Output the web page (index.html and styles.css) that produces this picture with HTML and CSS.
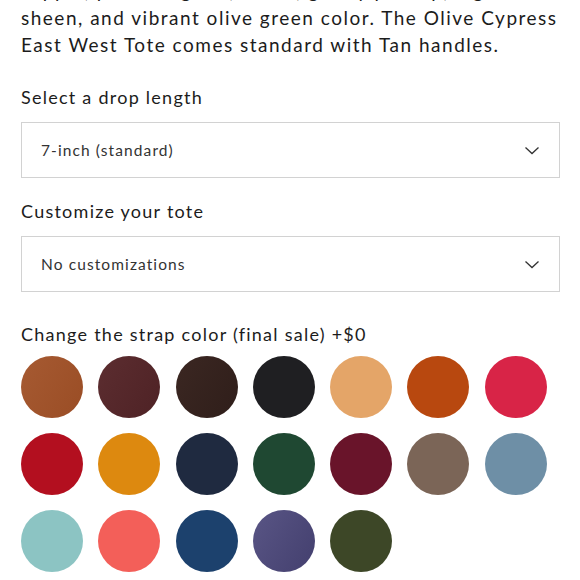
FILE: index.html
```html
<!DOCTYPE html>
<html lang="en">
<head>
<meta charset="utf-8">
<title>East West Tote</title>
<link rel="stylesheet" href="styles.css">
</head>
<body>
<main class="product">
  <p class="description">supple, pebbled grain, a rich, glossy pull-up, a gentle<br>sheen, and vibrant olive green color. The Olive Cypress<br>East West Tote comes standard with Tan handles.</p>

  <div class="field">
    <label class="field-label">Select a drop length</label>
    <div class="select">
      <span class="select-value">7-inch (standard)</span>
      <svg class="chevron" width="16" height="9" viewBox="0 0 16 9"><path d="M1.5 1.5l6.5 6 6.5-6" fill="none" stroke="#333" stroke-width="1.3"/></svg>
    </div>
  </div>

  <div class="field">
    <label class="field-label">Customize your tote</label>
    <div class="select">
      <span class="select-value">No customizations</span>
      <svg class="chevron" width="16" height="9" viewBox="0 0 16 9"><path d="M1.5 1.5l6.5 6 6.5-6" fill="none" stroke="#333" stroke-width="1.3"/></svg>
    </div>
  </div>

  <div class="swatches-field">
    <div class="field-label">Change the strap color (final sale) +$0</div>
    <div class="swatches">
      <span class="swatch s-tan"></span>
      <span class="swatch s-mahogany"></span>
      <span class="swatch s-chocolate"></span>
      <span class="swatch s-black"></span>
      <span class="swatch s-natural"></span>
      <span class="swatch s-cognac"></span>
      <span class="swatch s-raspberry"></span>
      <span class="swatch s-red"></span>
      <span class="swatch s-marigold"></span>
      <span class="swatch s-navy"></span>
      <span class="swatch s-green"></span>
      <span class="swatch s-wine"></span>
      <span class="swatch s-taupe"></span>
      <span class="swatch s-slate"></span>
      <span class="swatch s-aqua"></span>
      <span class="swatch s-coral"></span>
      <span class="swatch s-cobalt"></span>
      <span class="swatch s-purple"></span>
      <span class="swatch s-olive"></span>
    </div>
  </div>
</main>
</body>
</html>
```

FILE: styles.css
```css
* { box-sizing: border-box; }
html, body { margin: 0; padding: 0; background: #fff; }
body {
  font-family: Lato, "Open Sans", sans-serif;
  color: #1c1c1c;
  overflow: hidden;
}
.product {
  padding: 0 20px 0 21px;
}
.description {
  margin: -23px 0 0;
  font-size: 19px;
  line-height: 27px;
  letter-spacing: 1.5px;
  white-space: nowrap;
}
.field {
  margin-top: 27px;
}
.field + .field { margin-top: 21px; }
.field-label {
  display: block;
  font-size: 18px;
  line-height: 24px;
  letter-spacing: 1.25px;
}
.select {
  margin-top: 13px;
  height: 56px;
  border: 1px solid #d2d2d2;
  display: flex;
  align-items: center;
  justify-content: space-between;
  padding: 0 19px 0 19px;
}
.select-value {
  font-size: 15.5px;
  letter-spacing: 1.1px;
  color: #333;
}
.chevron { display: block; }
.swatches-field {
  margin-top: 30px;
}
.swatches {
  margin-top: 10px;
  display: grid;
  grid-template-columns: repeat(7, 62px);
  column-gap: 15.3px;
  row-gap: 15px;
}
.swatch {
  width: 62px;
  height: 62px;
  border-radius: 50%;
  display: block;
}
.s-tan { background: linear-gradient(120deg, #a65a32, #9a4d25); }
.s-mahogany { background: linear-gradient(120deg, #5c2d30, #4e2225); }
.s-chocolate { background: linear-gradient(120deg, #3b2722, #2f1e1a); }
.s-black { background: #1f1f22; }
.s-natural { background: #e4a568; }
.s-cognac { background: #b8480f; }
.s-raspberry { background: #d82447; }
.s-red { background: #b30f1f; }
.s-marigold { background: #dd890f; }
.s-navy { background: #1f2a40; }
.s-green { background: #1f4832; }
.s-wine { background: #69142a; }
.s-taupe { background: #7b6557; }
.s-slate { background: #6e8fa6; }
.s-aqua { background: #8cc4c3; }
.s-coral { background: #f35f59; }
.s-cobalt { background: #1c416d; }
.s-purple { background: linear-gradient(120deg, #595585, #433f6e); }
.s-olive { background: #3d4727; }
```
